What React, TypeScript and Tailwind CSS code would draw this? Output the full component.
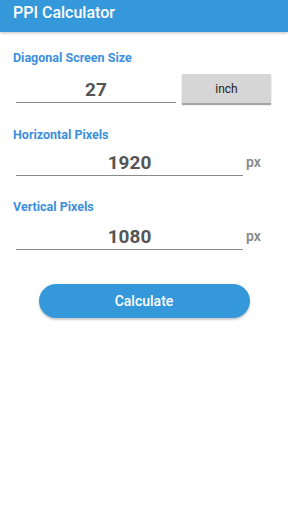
import React from "react";

function Field({ value, className }: { value: string; className: string }) {
  return (
    <div className={`flex h-[27px] items-end justify-center border-b border-[#8a8a8a] ${className}`}>
      <span className="text-[19px] font-bold leading-[24px] text-[#555555]">{value}</span>
    </div>
  );
}

export default function App() {
  return (
    <div className="relative h-[512px] w-[288px] overflow-hidden bg-white" style={{ fontFamily: "Roboto, 'Liberation Sans', sans-serif" }}>
      <div className="h-[32px] bg-[#3498db] pl-[13px] pt-[1px] shadow-[0_1px_3px_rgba(0,0,0,0.25)]">
        <span className="text-[16px] font-medium leading-[20px] text-white">PPI Calculator</span>
      </div>

      <div className="px-[13px]">
        <div className="mt-[18px] text-[12.5px] font-bold leading-[16px] text-[#3b8fdc]">Diagonal Screen Size</div>
        <div className="mt-[8px] flex items-start">
          <Field value="27" className="ml-[3px] mt-[2px] w-[160px]" />
          <div className="ml-[6px] flex h-[29px] w-[89px] items-center justify-center bg-[#d6d6d6] shadow-[0_2px_1px_rgba(0,0,0,0.35)]">
            <span className="text-[12px] leading-[14px] text-[#222]">inch</span>
          </div>
        </div>

        <div className="mt-[24px] text-[12.5px] font-bold leading-[16px] text-[#3b8fdc]">Horizontal Pixels</div>
        <div className="mt-[6px] flex items-start">
          <Field value="1920" className="ml-[3px] w-[227px]" />
          <span className="ml-[3px] mt-[5px] text-[14px] font-semibold leading-[16px] text-[#8a8a8a]">px</span>
        </div>

        <div className="mt-[23px] text-[12.5px] font-bold leading-[16px] text-[#3b8fdc]">Vertical Pixels</div>
        <div className="mt-[8px] flex items-start">
          <Field value="1080" className="ml-[3px] w-[227px]" />
          <span className="ml-[3px] mt-[5px] text-[14px] font-semibold leading-[16px] text-[#8a8a8a]">px</span>
        </div>

        <div className="mt-[34px] flex justify-center pl-[1px]">
          <div className="ml-[-1px] flex h-[34px] w-[211px] items-center justify-center rounded-full bg-[#3498db] shadow-[0_2px_2px_rgba(0,0,0,0.2)]">
            <span className="text-[14px] font-medium leading-[18px] text-white">Calculate</span>
          </div>
        </div>
      </div>
    </div>
  );
}
